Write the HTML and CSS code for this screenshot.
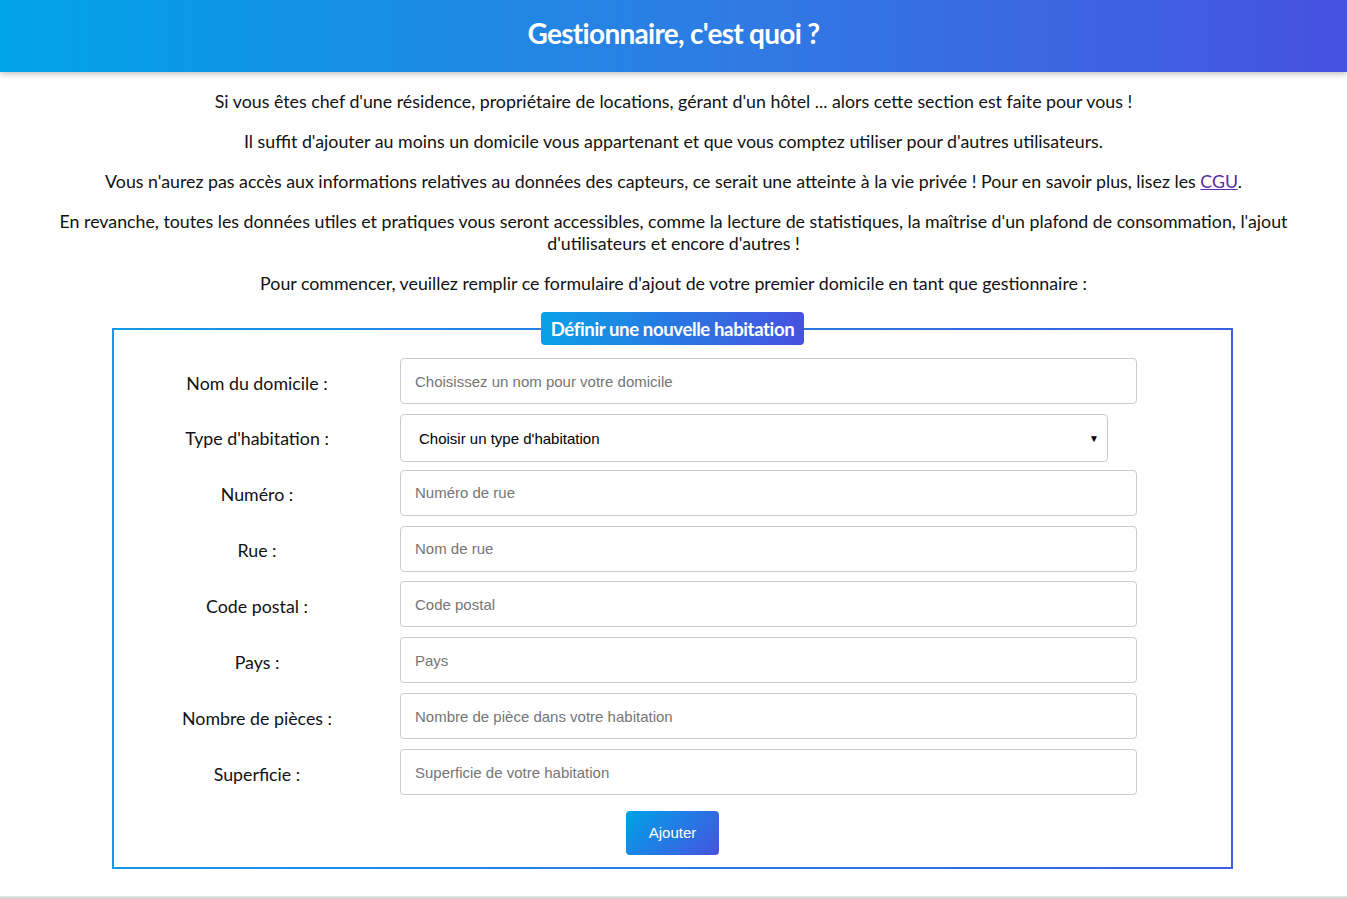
FILE: index.html
```html
<!DOCTYPE html>
<html lang="fr">
<head>
<meta charset="utf-8">
<title>Gestionnaire</title>
<link rel="stylesheet" href="styles.css">
</head>
<body>
<header class="topbar">
  <h1 class="title">Gestionnaire, c'est quoi ?</h1>
</header>
<main class="content">
  <p>Si vous êtes chef d'une résidence, propriétaire de locations, gérant d'un hôtel ... alors cette section est faite pour vous !</p>
  <p>Il suffit d'ajouter au moins un domicile vous appartenant et que vous comptez utiliser pour d'autres utilisateurs.</p>
  <p>Vous n'aurez pas accès aux informations relatives au données des capteurs, ce serait une atteinte à la vie privée ! Pour en savoir plus, lisez les <a href="#" class="link">CGU</a>.</p>
  <p>En revanche, toutes les données utiles et pratiques vous seront accessibles, comme la lecture de statistiques, la maîtrise d'un plafond de consommation, l'ajout d'utilisateurs et encore d'autres !</p>
  <p>Pour commencer, veuillez remplir ce formulaire d'ajout de votre premier domicile en tant que gestionnaire :</p>

  <form class="form">
    <fieldset class="box">
      <legend class="legend">Définir une nouvelle habitation</legend>
      <div class="row">
        <label class="label">Nom du domicile :</label>
        <input class="field" type="text" placeholder="Choisissez un nom pour votre domicile">
      </div>
      <div class="row">
        <label class="label">Type d'habitation :</label>
        <div class="select">
          <span>Choisir un type d'habitation</span>
          <span class="caret">&#9660;</span>
        </div>
      </div>
      <div class="row">
        <label class="label">Numéro :</label>
        <input class="field" type="text" placeholder="Numéro de rue">
      </div>
      <div class="row">
        <label class="label">Rue :</label>
        <input class="field" type="text" placeholder="Nom de rue">
      </div>
      <div class="row">
        <label class="label">Code postal :</label>
        <input class="field" type="text" placeholder="Code postal">
      </div>
      <div class="row">
        <label class="label">Pays :</label>
        <input class="field" type="text" placeholder="Pays">
      </div>
      <div class="row">
        <label class="label">Nombre de pièces :</label>
        <input class="field" type="text" placeholder="Nombre de pièce dans votre habitation">
      </div>
      <div class="row">
        <label class="label">Superficie :</label>
        <input class="field" type="text" placeholder="Superficie de votre habitation">
      </div>
      <div class="actions">
        <button type="button" class="btn">Ajouter</button>
      </div>
    </fieldset>
  </form>
</main>
<footer class="footer"></footer>
</body>
</html>
```

FILE: styles.css
```css
* { box-sizing: border-box; }
html, body { margin: 0; padding: 0; }
body {
  font-family: Lato, "Noto Sans", sans-serif;
  color: #111;
  background: #fff;
  height: 899px;
  overflow: hidden;
  position: relative;
}
.topbar {
  height: 72px;
  background: linear-gradient(to right, #00a3e8, #2f7be3 55%, #4652e0);
  box-shadow: 0 2px 6px rgba(0,0,0,0.25);
  display: flex;
  align-items: center;
  justify-content: center;
  padding-bottom: 6px;
}
.title {
  margin: 0;
  color: #fff;
  font-size: 28px;
  font-weight: 700;
  letter-spacing: -0.7px;
}
.content {
  padding: 18px 40px 0;
  text-align: center;
}
.content p {
  margin: 0 0 18px;
  font-size: 17.8px;
  line-height: 22px;
  color: #111;
}
.link { color: #5b2ca0; }
.form {
  width: 1121px;
  margin: 0 auto;
  position: relative;
  left: -1px;
}
.box {
  margin: 0;
  border: 2px solid #2a80e2;
  border-image: linear-gradient(to right, #1598e6, #3a5fe0) 1;
  padding: 13px 0 12px;
}
.legend {
  margin: 0 auto;
  padding: 0 10px;
  height: 33px;
  line-height: 35px;
  background: linear-gradient(to right, #0aa0e6, #4652e0);
  color: #fff;
  font-weight: 700;
  font-size: 18.6px;
  letter-spacing: -0.4px;
  border-radius: 4px;
}
.row {
  display: flex;
  align-items: center;
  margin-bottom: 9.86px;
  height: 46px;
}
.label {
  width: 286px;
  text-align: center;
  font-size: 17.8px;
  padding-top: 3px;
}
.field {
  width: 737px;
  height: 46px;
  border: 1px solid #ccc;
  border-radius: 4px;
  padding: 0 14px;
  font-family: "Liberation Sans", Arial, sans-serif;
  font-size: 15px;
  color: #333;
  outline: none;
}
.field::placeholder { color: #757575; }
.select {
  align-self: flex-start;
  width: 708px;
  height: 48px;
  border: 1px solid #ccc;
  border-radius: 4px;
  padding: 1px 8px 0 18px;
  display: flex;
  align-items: center;
  justify-content: space-between;
  font-family: "Liberation Sans", Arial, sans-serif;
  font-size: 15px;
  color: #000;
}
.caret { font-size: 10px; }
.actions {
  display: flex;
  justify-content: center;
  padding-top: 6px;
}
.btn {
  width: 93px;
  height: 44px;
  border: none;
  border-radius: 4px;
  background: linear-gradient(135deg, #00a3e8, #4652e0);
  color: #fff;
  font-family: "Liberation Sans", Arial, sans-serif;
  font-size: 15px;
}
.footer {
  position: absolute;
  left: 0;
  right: 0;
  top: 896px;
  height: 3px;
  background: linear-gradient(to bottom, #e8e8e8, #cfcfcf);
}
```
